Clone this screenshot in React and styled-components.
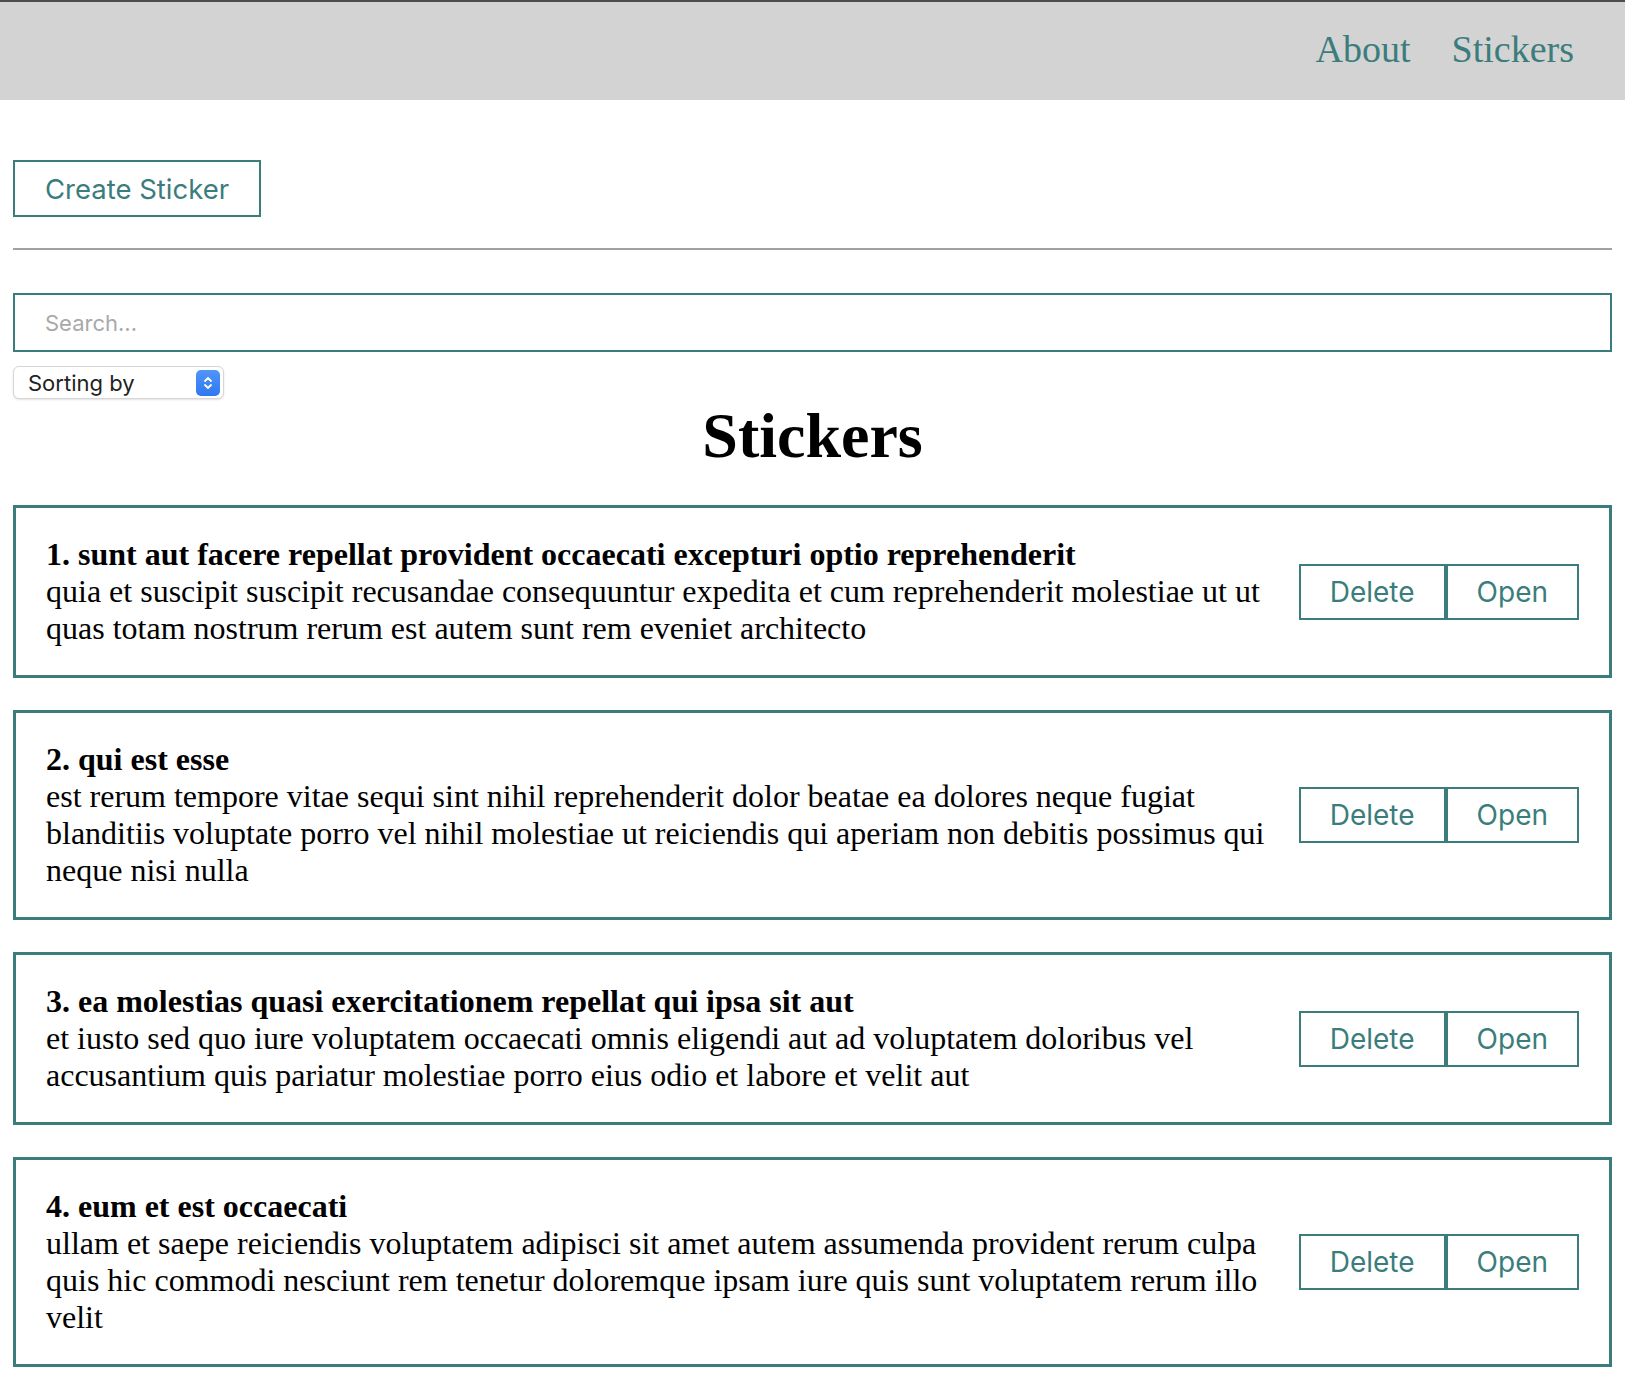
import React, { useState } from 'react';
import styled, { createGlobalStyle } from 'styled-components';

const teal = '#3a7d7c';

const posts = [
    {
        id: 1,
        title: 'sunt aut facere repellat provident occaecati excepturi optio reprehenderit',
        body: 'quia et suscipit suscipit recusandae consequuntur expedita et cum reprehenderit molestiae ut ut quas totam nostrum rerum est autem sunt rem eveniet architecto',
    },
    {
        id: 2,
        title: 'qui est esse',
        body: 'est rerum tempore vitae sequi sint nihil reprehenderit dolor beatae ea dolores neque fugiat blanditiis voluptate porro vel nihil molestiae ut reiciendis qui aperiam non debitis possimus qui neque nisi nulla',
    },
    {
        id: 3,
        title: 'ea molestias quasi exercitationem repellat qui ipsa sit aut',
        body: 'et iusto sed quo iure voluptatem occaecati omnis eligendi aut ad voluptatem doloribus vel accusantium quis pariatur molestiae porro eius odio et labore et velit aut',
    },
    {
        id: 4,
        title: 'eum et est occaecati',
        body: 'ullam et saepe reiciendis voluptatem adipisci sit amet autem assumenda provident rerum culpa quis hic commodi nesciunt rem tenetur doloremque ipsam iure quis sunt voluptatem rerum illo velit',
    },
];

const App = () => {
    const [query, setQuery] = useState('');
    const [sort, setSort] = useState('');

    return (
        <Page>
            <GlobalStyle />
            <NavBar>
                <NavLink href="#about">About</NavLink>
                <NavLink href="#stickers">Stickers</NavLink>
            </NavBar>
            <Main>
                <OutlineButton>Create Sticker</OutlineButton>
                <Divider />
                <SearchInput
                    placeholder="Search..."
                    value={query}
                    onChange={e => setQuery(e.target.value)}
                />
                <SelectWrap>
                    <Select value={sort} onChange={e => setSort(e.target.value)}>
                        <option value="" disabled>Sorting by</option>
                        <option value="title">By title</option>
                        <option value="body">By description</option>
                    </Select>
                    <SelectArrow>
                        <svg width="10" height="16" viewBox="0 0 10 16" fill="none">
                            <path d="M2 6 L5 3 L8 6" stroke="#fff" strokeWidth="1.8" strokeLinecap="round" strokeLinejoin="round" />
                            <path d="M2 10 L5 13 L8 10" stroke="#fff" strokeWidth="1.8" strokeLinecap="round" strokeLinejoin="round" />
                        </svg>
                    </SelectArrow>
                </SelectWrap>
                <Title>Stickers</Title>
                {
                    posts.map(post => (
                        <Card key={post.id}>
                            <CardText>
                                <CardTitle>{post.id}. {post.title}</CardTitle>
                                <div>{post.body}</div>
                            </CardText>
                            <CardActions>
                                <ActionButton>Delete</ActionButton>
                                <ActionButton>Open</ActionButton>
                            </CardActions>
                        </Card>
                    ))
                }
            </Main>
        </Page>
    );
};

const GlobalStyle = createGlobalStyle`
    body {
        margin: 0;
        background: #fff;
        font-family: "Liberation Serif", "Times New Roman", serif;
    }
`;

const Page = styled.div`
    border-top: 2px solid #4d4d4d;
    margin-right: 7px;
`;

const NavBar = styled.nav`
    height: 98px;
    background: #d3d3d3;
    display: flex;
    justify-content: flex-end;
    align-items: center;
    gap: 41px;
    padding: 0 51px 4px 0;
    box-sizing: border-box;
`;

const NavLink = styled.a`
    font-family: "Liberation Serif", serif;
    font-size: 38px;
    color: ${teal};
    text-decoration: none;
`;

const Main = styled.main`
    padding: 60px 13px 20px 13px;
`;

const OutlineButton = styled.button`
    font-family: Inter, "Liberation Sans", sans-serif;
    font-size: 27.5px;
    line-height: 33px;
    padding: 11px 30px 9px;
    color: ${teal};
    background: #fff;
    border: 2px solid ${teal};
    cursor: pointer;
`;

const Divider = styled.hr`
    margin: 31px 0 43px;
    border: none;
    height: 2px;
    background: #a2a2a2;
`;

const SearchInput = styled.input`
    display: block;
    width: 100%;
    box-sizing: border-box;
    height: 59px;
    padding: 0 30px;
    border: 2px solid ${teal};
    font-family: Inter, "Liberation Sans", sans-serif;
    font-size: 22px;
    outline: none;

    &::placeholder {
        color: #a9a9a9;
    }
`;

const SelectWrap = styled.div`
    position: relative;
    width: 211px;
    height: 33px;
    margin-top: 14px;
`;

const Select = styled.select`
    appearance: none;
    width: 100%;
    height: 100%;
    padding: 0 40px 0 14px;
    border: 1px solid #d6d6d6;
    border-radius: 6px;
    background: #fff;
    box-shadow: 0 1px 2px rgba(0, 0, 0, 0.12);
    font-family: Inter, "Liberation Sans", sans-serif;
    font-size: 22px;
    color: #222;
    outline: none;
`;

const SelectArrow = styled.span`
    position: absolute;
    right: 4px;
    top: 4px;
    width: 24px;
    height: 26px;
    border-radius: 5px;
    background: linear-gradient(#4f95f8, #2f78f0);
    display: flex;
    align-items: center;
    justify-content: center;
    pointer-events: none;
`;

const Title = styled.h1`
    margin: 0 0 32px;
    text-align: center;
    font-size: 64px;
    font-weight: bold;
`;

const Card = styled.div`
    display: flex;
    align-items: center;
    gap: 29px;
    padding: 28px 30px;
    border: 3px solid ${teal};
    margin-bottom: 32px;
    font-size: 32px;
    color: #000;
`;

const CardText = styled.div`
    flex: 1;
`;

const CardTitle = styled.div`
    font-weight: bold;
`;

const CardActions = styled.div`
    display: flex;
    flex-shrink: 0;
`;

const ActionButton = styled.button`
    height: 56px;
    padding: 0 29px;
    font-family: Inter, "Liberation Sans", sans-serif;
    font-size: 28px;
    color: ${teal};
    background: #fff;
    border: 2px solid ${teal};
    cursor: pointer;
`;

export default App;
